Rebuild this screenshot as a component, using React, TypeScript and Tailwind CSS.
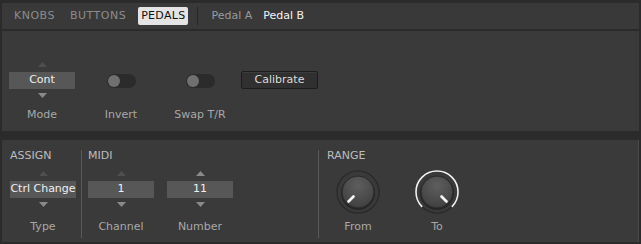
import React from "react";

const font = { fontFamily: '"DejaVu Sans", "Liberation Sans", sans-serif' };

function Tri({ up, dim }: { up?: boolean; dim?: boolean }) {
  return (
    <svg width="9" height="5" viewBox="0 0 9 5">
      <polygon
        points={up ? "0,5 9,5 4.5,0" : "0,0 9,0 4.5,5"}
        fill={dim ? "#4f4f4f" : "#8a8a8a"}
      />
    </svg>
  );
}

function Stepper({
  value,
  label,
  upDim,
  downDim,
  tight,
}: {
  value: string;
  label: string;
  upDim?: boolean;
  downDim?: boolean;
  tight?: boolean;
}) {
  return (
    <div className="flex w-[66px] flex-col items-center">
      <div className="flex h-[10px] items-start justify-center">
        <Tri up dim={upDim} />
      </div>
      <div className="flex h-[17px] w-[66px] items-center justify-center bg-[#575757] text-[11px] text-[#f0f0f0]">
        {value}
      </div>
      <div className="flex h-[10px] items-center justify-center pt-[2px]">
        <Tri dim={downDim} />
      </div>
      <div className={`${tight ? "mt-[9px]" : "mt-[12px]"} text-[11px] leading-[14px] text-[#a8a8a8]`}>
        {label}
      </div>
    </div>
  );
}

function Toggle({ label }: { label: string }) {
  return (
    <div className="flex w-[66px] flex-col items-center">
      <div className="flex h-[10px]" />
      <div className="flex h-[17px] items-center">
        <div className="flex h-[14px] w-[29px] items-center rounded-full bg-[#2b2b2b] pl-[1px]">
          <div className="h-[12px] w-[12px] rounded-full bg-[#707070]" />
        </div>
      </div>
      <div className="h-[10px]" />
      <div className="mt-[9px] text-[11px] leading-[14px] text-[#a8a8a8]">{label}</div>
    </div>
  );
}

function Knob({ label, max }: { label: string; max?: boolean }) {
  const dir = max ? 1 : -1;
  return (
    <div className="flex w-[60px] flex-col items-center">
      <svg width="46" height="46" viewBox="0 0 46 46">
        <defs>
          <radialGradient id={`kg${label}`} cx="50%" cy="30%" r="70%">
            <stop offset="0%" stopColor="#5e5e5e" />
            <stop offset="100%" stopColor="#404040" />
          </radialGradient>
        </defs>
        <circle cx="23" cy="23" r="21" fill="none" stroke="#2c2c2c" strokeWidth="1.6" />
        {max && (
          <path
            d="M 8.15 37.85 A 21 21 0 1 1 37.85 37.85"
            fill="none"
            stroke="#f2f2f2"
            strokeWidth="1.6"
          />
        )}
        <circle cx="23" cy="24" r="17" fill="#262626" />
        <circle cx="23" cy="23" r="16" fill={`url(#kg${label})`} stroke="#2a2a2a" strokeWidth="1" />
        <line
          x1={23 + dir * 4.5}
          y1={27.5}
          x2={23 + dir * 9.5}
          y2={32.5}
          stroke="#f4f4f4"
          strokeWidth="2.6"
          strokeLinecap="round"
        />
      </svg>
      <div className="mt-[5px] text-[11px] leading-[14px] text-[#a8a8a8]">{label}</div>
    </div>
  );
}

export default function App() {
  return (
    <div
      className="flex h-[244px] w-[641px] flex-col bg-[#2b2b2b] px-[2px] pt-[3px]"
      style={font}
    >
      {/* Tabs */}
      <div className="flex h-[26px] w-[637px] items-center bg-[#393939] pl-[12px] text-[11px]">
        <span className="tracking-[0.5px] text-[#8c8c8c]">KNOBS</span>
        <span className="ml-[15px] tracking-[0.5px] text-[#8c8c8c]">BUTTONS</span>
        <span className="ml-[12px] rounded-[2px] bg-[#e4e4e4] px-[3px] py-[2px] leading-[14px] tracking-[0.3px] text-[#111]">
          PEDALS
        </span>
        <div className="ml-[9px] h-[18px] w-px bg-[#262626]" />
        <span className="ml-[13px] text-[#9a9a9a]">Pedal A</span>
        <span className="ml-[11px] text-[#f4f4f4]">Pedal B</span>
      </div>

      {/* Upper panel */}
      <div className="mt-[2px] flex h-[100px] w-[637px] bg-[#3a3a3a] pl-[7px] pt-[31px]">
        <div className="flex gap-[13px]">
          <Stepper value="Cont" label="Mode" upDim tight />
          <Toggle label="Invert" />
          <Toggle label="Swap T/R" />
        </div>
        <div className="ml-[8px] mt-[9px] flex h-[18px] w-[77px] items-center justify-center rounded-[2px] border border-[#1c1c1c] bg-[#303030] text-[11px] text-[#dcdcdc] shadow-[inset_0_1px_0_#3c3c3c]">
          Calibrate
        </div>
      </div>

      {/* Lower panel */}
      <div className="mt-[9px] flex h-[102px] w-[637px] border-r border-[#4a4a4a] bg-[#3a3a3a] pt-[9px]">
        <div className="flex w-[79px] flex-col pl-[8px]">
          <div className="text-[11px] leading-[14px] text-[#bdbdbd]">ASSIGN</div>
          <div className="mt-[8px]">
            <Stepper value="Ctrl Change" label="Type" upDim />
          </div>
        </div>
        <div className="mt-[1px] h-[88px] w-px bg-[#5a5a5a]" />
        <div className="flex w-[236px] flex-col pl-[6px]">
          <div className="text-[11px] leading-[14px] text-[#bdbdbd]">MIDI</div>
          <div className="mt-[8px] flex gap-[13px]">
            <Stepper value="1" label="Channel" upDim />
            <Stepper value="11" label="Number" />
          </div>
        </div>
        <div className="mt-[1px] h-[88px] w-px bg-[#5a5a5a]" />
        <div className="flex flex-col pl-[8px]">
          <div className="text-[11px] leading-[14px] text-[#bdbdbd]">RANGE</div>
          <div className="mt-[6px] ml-[1px] flex gap-[19px]">
            <Knob label="From" />
            <Knob label="To" max />
          </div>
        </div>
      </div>
    </div>
  );
}
